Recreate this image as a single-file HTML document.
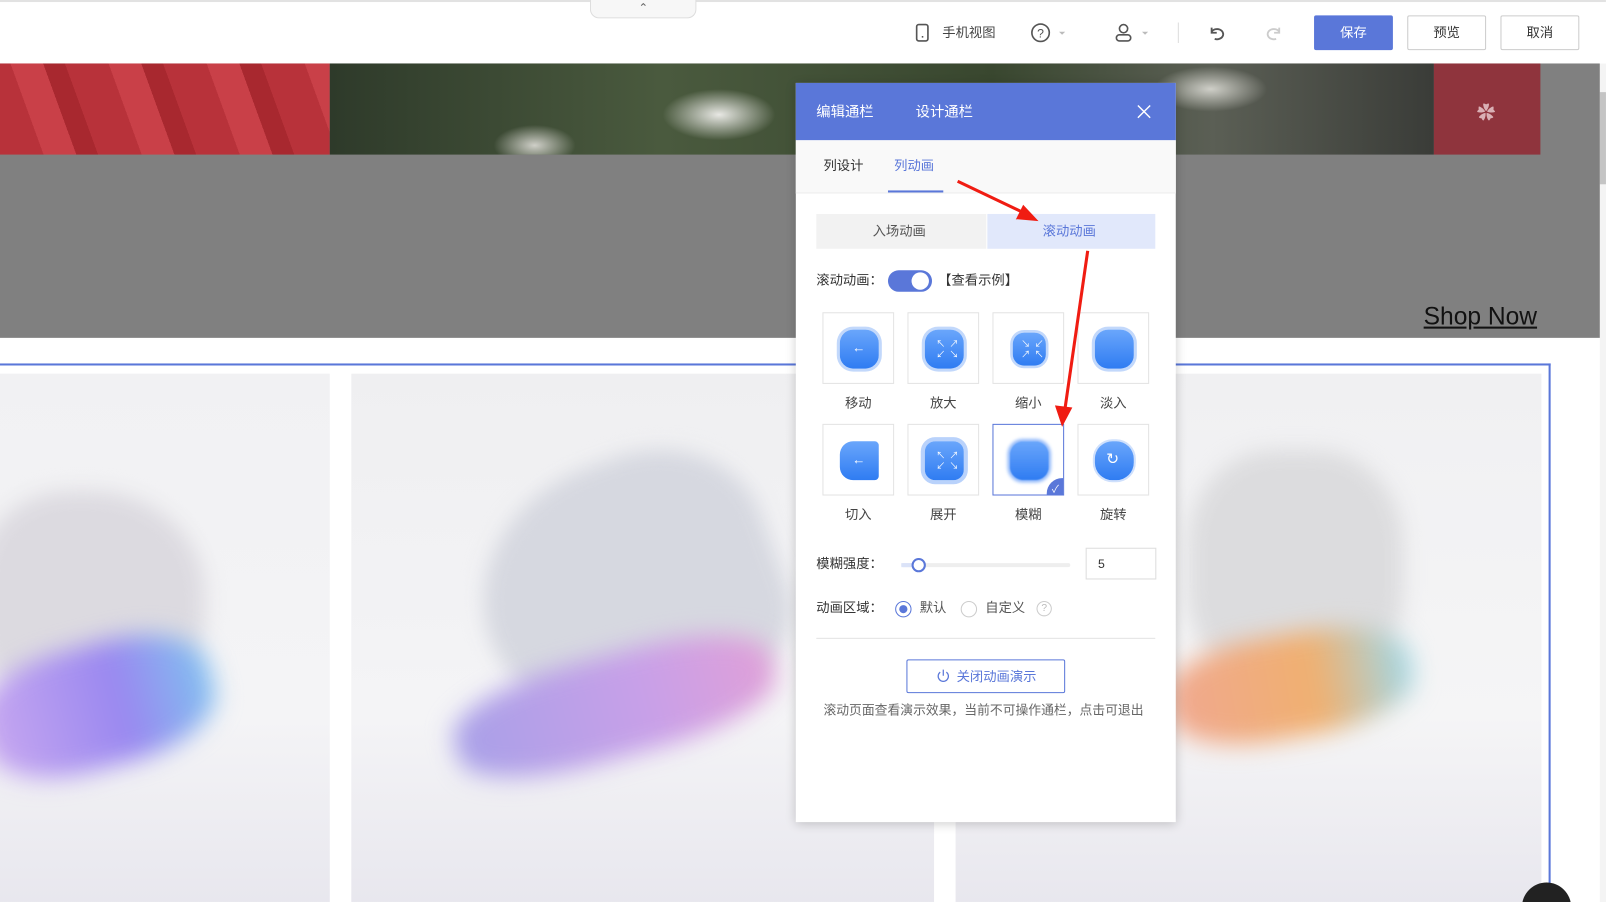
<!DOCTYPE html>
<html><head><meta charset="utf-8">
<style>
*{margin:0;padding:0;box-sizing:border-box}
html,body{width:1606px;height:902px;overflow:hidden;background:#fff}
body{font-family:"Liberation Sans","Noto Sans CJK SC",sans-serif;}
#w{position:absolute;left:0;top:0;width:1568px;height:881px;transform:scale(1.0242,1.0238);transform-origin:0 0;overflow:hidden}
.a{position:absolute}
.t{position:absolute;font-size:13px;color:#333;white-space:nowrap;line-height:1}
.card{position:absolute;width:70px;height:70px;border:1px solid #e3e3e3;background:#fff}
.ic{position:absolute;left:16px;top:16px;width:38px;height:38px;border-radius:13px;background:linear-gradient(#6aa6fb,#2f7cf2);box-shadow:0 0 0 3px #c2d8fb}
.lbl{position:absolute;font-size:13px;color:#444;width:70px;text-align:center}
.btn{position:absolute;top:15px;height:34px;width:77px;border:1px solid #ccc;border-radius:2px;font-size:13px;text-align:center;line-height:32px;color:#333;background:#fff}
</style></head><body><div id="w">
<div class="a" style="left:0;top:0;width:1568px;height:62px;background:#fff;border-top:2px solid #e2e2e2"></div>
<div class="a" style="left:576px;top:0;width:104px;height:18px;border:1px solid #ddd;border-top:none;border-radius:0 0 9px 9px;background:#f7f7f7;text-align:center;font-size:11px;color:#666;line-height:16px">&#8963;</div>
<svg class="a" style="left:893px;top:23px" width="16" height="19"><rect x="2" y="1" width="11" height="16" rx="2" fill="none" stroke="#555" stroke-width="1.6"/><line x1="7" y1="13" x2="8.5" y2="13" stroke="#555" stroke-width="1.6"/></svg>
<div class="t" style="left:920px;top:25px;color:#444">手机视图</div>
<svg class="a" style="left:1006px;top:22px" width="40" height="20"><circle cx="10" cy="10" r="8.5" fill="none" stroke="#555" stroke-width="1.6"/><text x="10" y="14.5" font-size="12" text-anchor="middle" fill="#555" font-family="Liberation Sans">?</text><path d="M28 9l3 3 3-3z" fill="#bbb"/></svg>
<svg class="a" style="left:1087px;top:22px" width="40" height="20"><circle cx="10" cy="6" r="4" fill="none" stroke="#555" stroke-width="1.6"/><rect x="3" y="12" width="14" height="6" rx="3" fill="none" stroke="#555" stroke-width="1.6"/><path d="M28 9l3 3 3-3z" fill="#bbb"/></svg>
<div class="a" style="left:1150px;top:22px;width:1px;height:20px;background:#ddd"></div>
<svg class="a" style="left:1178px;top:22px" width="20" height="20"><path d="M5 5v5h5M5 9a6 5 0 1 1 3 7" fill="none" stroke="#555" stroke-width="1.8"/></svg>
<svg class="a" style="left:1234px;top:22px" width="20" height="20"><path d="M15 5v5h-5M15 9a6 5 0 1 0 -3 7" fill="none" stroke="#ccc" stroke-width="1.8"/></svg>
<div class="btn" style="left:1283px;background:#5a77d9;border-color:#5a77d9;color:#fff">保存</div>
<div class="btn" style="left:1374px">预览</div>
<div class="btn" style="left:1465px">取消</div>
<div class="a" style="left:1562px;top:62px;width:6px;height:819px;background:#f4f4f4"></div>
<div class="a" style="left:1562px;top:90px;width:6px;height:90px;background:#c4c4c4"></div>
<div class="a" style="left:0;top:62px;width:1562px;height:268px;background:#808080"></div>
<div class="a" style="left:0;top:62px;width:322px;height:89px;background:repeating-linear-gradient(70deg,#b8323a 0 40px,#c94048 40px 70px,#a8282f 70px 90px)"></div>
<div class="a" style="left:322px;top:62px;width:1078px;height:89px;background:radial-gradient(ellipse 55px 25px at 380px 50px,#e8e8e4,transparent),radial-gradient(ellipse 40px 20px at 200px 80px,#cfcfc8,transparent),radial-gradient(ellipse 55px 22px at 860px 25px,#cfcfc8,transparent),radial-gradient(ellipse 45px 20px at 620px 70px,#d8d8d0,transparent),linear-gradient(90deg,#2e3a2a,#4a5a3e 30%,#39472f 60%,#5b5f55 80%,#3a3c38)"></div>
<div class="a" style="left:1400px;top:62px;width:104px;height:89px;background:#8f343d"></div>
<div class="a" style="left:1442px;top:96px;color:#d9b0b5;font-size:18px">✿</div>
<div class="a" style="left:1390px;top:296px;font-size:24px;color:#111;text-decoration:underline">Shop Now</div>
<div class="a" style="left:0;top:355px;width:1514px;height:530px;border-top:2px solid #5a77d9;border-right:2px solid #5a77d9"></div>
<div class="a" style="left:0;top:365px;width:322px;height:516px;background:linear-gradient(#f1f1f3,#f4f4f6 65%,#e8e7ee 100%)"></div>
<div class="a" style="left:343px;top:365px;width:569px;height:516px;background:linear-gradient(#efeff1,#f4f4f6 65%,#e8e7ee 100%)"></div>
<div class="a" style="left:933px;top:365px;width:572px;height:516px;background:linear-gradient(#f0f0f2,#f5f5f6 65%,#e8e7ee 100%)"></div>
<div class="a" style="left:-20px;top:480px;width:220px;height:200px;border-radius:40% 50% 40% 30%;background:#dcdae0;filter:blur(10px)"></div>
<div class="a" style="left:-20px;top:630px;width:230px;height:120px;border-radius:40%;background:linear-gradient(90deg,#c8a8f0,#9a88f0 60%,#80c0f0);filter:blur(12px);transform:rotate(-15deg)"></div>
<div class="a" style="left:470px;top:450px;width:290px;height:250px;border-radius:50% 40% 30% 50%;background:#d6d8e0;filter:blur(10px);transform:rotate(-20deg)"></div>
<div class="a" style="left:440px;top:640px;width:320px;height:100px;border-radius:40%;background:linear-gradient(90deg,#a8a0e8,#c8a0e8 60%,#e0a0d8);filter:blur(12px);transform:rotate(-15deg)"></div>
<div class="a" style="left:1160px;top:440px;width:210px;height:230px;border-radius:40%;background:#dcdcde;filter:blur(10px)"></div>
<div class="a" style="left:1140px;top:620px;width:240px;height:100px;border-radius:40%;background:linear-gradient(90deg,#f0a890,#f0b070 60%,#a0d8e8);filter:blur(12px);transform:rotate(-10deg)"></div>
<div class="a" style="left:1486px;top:862px;width:48px;height:48px;border-radius:50%;background:#222"></div>
<div class="a" style="left:777px;top:81px;width:371px;height:722px;background:#fff;box-shadow:0 2px 10px rgba(0,0,0,.2)"></div>
<div class="a" style="left:777px;top:81px;width:371px;height:56px;background:#5a77d9"></div>
<div class="t" style="left:797px;top:102px;color:#fff;font-size:14px">编辑通栏</div>
<div class="t" style="left:894px;top:102px;color:#fff;font-size:14px">设计通栏</div>
<div class="a" style="left:819px;top:131px;width:0;height:0;border:6px solid transparent;border-bottom-color:#fff"></div>
<svg class="a" style="left:1110px;top:102px" width="14" height="14"><path d="M1 1L13 13M13 1L1 13" stroke="#fff" stroke-width="1.4"/></svg>
<div class="a" style="left:777px;top:137px;width:371px;height:52px;background:#f9f9f9;border-bottom:1px solid #ececec"></div>
<div class="t" style="left:804px;top:155px">列设计</div>
<div class="t" style="left:873px;top:155px;color:#5a77d9">列动画</div>
<div class="a" style="left:867px;top:186px;width:54px;height:2px;background:#5a77d9"></div>
<div class="a" style="left:797px;top:209px;width:166px;height:34px;background:#f2f2f2"></div>
<div class="a" style="left:964px;top:209px;width:164px;height:34px;background:#e1e8fb"></div>
<div class="t" style="left:852px;top:219px;color:#555">入场动画</div>
<div class="t" style="left:1018px;top:219px;color:#5a77d9">滚动动画</div>
<div class="t" style="left:797px;top:267px">滚动动画：</div>
<div class="a" style="left:867px;top:264px;width:43px;height:21px;border-radius:11px;background:#5a77d9"></div>
<div class="a" style="left:890px;top:266px;width:17px;height:17px;border-radius:50%;background:#fff"></div>
<div class="t" style="left:916px;top:267px">【查看示例】</div>
<div class="card" style="left:803px;top:305px"><div class="ic"></div><div class="a" style="left:28px;top:26px;color:#fff;font-size:13px">←</div></div>
<div class="card" style="left:886px;top:305px"><div class="ic"></div><div class="a" style="left:27px;top:25px;color:#fff;font-size:9px;line-height:10px;letter-spacing:4px">↖↗<br>↙↘</div></div>
<div class="card" style="left:969px;top:305px"><div class="ic" style="transform:scale(.85)"></div><div class="a" style="left:27px;top:25px;color:#fff;font-size:9px;line-height:10px;letter-spacing:4px">↘↙<br>↗↖</div></div>
<div class="card" style="left:1052px;top:305px"><div class="ic"></div></div>
<div class="lbl" style="left:803px;top:383px">移动</div>
<div class="lbl" style="left:886px;top:383px">放大</div>
<div class="lbl" style="left:969px;top:383px">缩小</div>
<div class="lbl" style="left:1052px;top:383px">淡入</div>
<div class="card" style="left:803px;top:414px"><div class="ic" style="box-shadow:none;border-radius:13px 4px 4px 13px"></div><div class="a" style="left:28px;top:26px;color:#fff;font-size:13px">←</div></div>
<div class="card" style="left:886px;top:414px"><div class="ic" style="box-shadow:0 0 0 4px #b9d2fb;border-radius:10px"></div><div class="a" style="left:27px;top:25px;color:#fff;font-size:9px;line-height:10px;letter-spacing:4px">↖↗<br>↙↘</div></div>
<div class="card" style="left:969px;top:414px;border-color:#5a77d9;overflow:hidden"><div class="ic" style="box-shadow:0 0 3px 2px #8fb7fa;filter:blur(.6px)"></div><div class="a" style="left:52px;top:52px;width:30px;height:30px;border-radius:50%;background:#5a77d9"></div><div class="a" style="left:57px;top:54px;color:#fff;font-size:10px">✓</div></div>
<div class="card" style="left:1052px;top:414px"><div class="ic" style="border-radius:45%;box-shadow:0 0 0 2px #cfe0fc"></div><div class="a" style="left:27px;top:24px;color:#fff;font-size:15px">↻</div></div>
<div class="lbl" style="left:803px;top:492px">切入</div>
<div class="lbl" style="left:886px;top:492px">展开</div>
<div class="lbl" style="left:969px;top:492px">模糊</div>
<div class="lbl" style="left:1052px;top:492px">旋转</div>
<div class="t" style="left:797px;top:544px">模糊强度：</div>
<div class="a" style="left:880px;top:550px;width:165px;height:4px;border-radius:2px;background:#eee"></div>
<div class="a" style="left:880px;top:550px;width:17px;height:4px;background:#dbe3f8"></div>
<div class="a" style="left:890px;top:545px;width:14px;height:14px;border-radius:50%;border:2px solid #5a77d9;background:#fff"></div>
<div class="a" style="left:1060px;top:535px;width:69px;height:31px;border:1px solid #ddd"></div>
<div class="t" style="left:1072px;top:545px;font-size:12px">5</div>
<div class="t" style="left:797px;top:587px">动画区域：</div>
<div class="a" style="left:874px;top:587px;width:16px;height:16px;border-radius:50%;border:1px solid #5a77d9"></div>
<div class="a" style="left:878px;top:591px;width:8px;height:8px;border-radius:50%;background:#5a77d9"></div>
<div class="t" style="left:898px;top:587px;color:#555">默认</div>
<div class="a" style="left:938px;top:587px;width:16px;height:16px;border-radius:50%;border:1px solid #ccc"></div>
<div class="t" style="left:962px;top:587px;color:#555">自定义</div>
<div class="a" style="left:1012px;top:587px;width:15px;height:15px;border-radius:50%;border:1px solid #ccc;font-size:10px;color:#bbb;text-align:center;line-height:13px">?</div>
<div class="a" style="left:797px;top:623px;width:331px;height:1px;background:#e3e3e3"></div>
<div class="a" style="left:885px;top:644px;width:155px;height:33px;border:1px solid #5a77d9;border-radius:2px"></div>
<svg class="a" style="left:914px;top:653px" width="14" height="14"><path d="M4 3.5A5 5 0 1 0 10 3.5M7 1v6" fill="none" stroke="#5a77d9" stroke-width="1.2"/></svg>
<div class="t" style="left:934px;top:654px;color:#5a77d9">关闭动画演示</div>
<div class="t" style="left:804px;top:688px;color:#666;font-size:12.5px">滚动页面查看演示效果，当前不可操作通栏，点击可退出</div>
<svg class="a" style="left:0;top:0" width="1568" height="881">
<line x1="935" y1="177" x2="1000" y2="208" stroke="#f01c12" stroke-width="3"/>
<path d="M1014 216L992 214 999 200z" fill="#f01c12"/>
<line x1="1062" y1="245" x2="1040" y2="398" stroke="#f01c12" stroke-width="3"/>
<path d="M1037 417L1030 396 1047 398z" fill="#f01c12"/>
</svg>
</div></body></html>
